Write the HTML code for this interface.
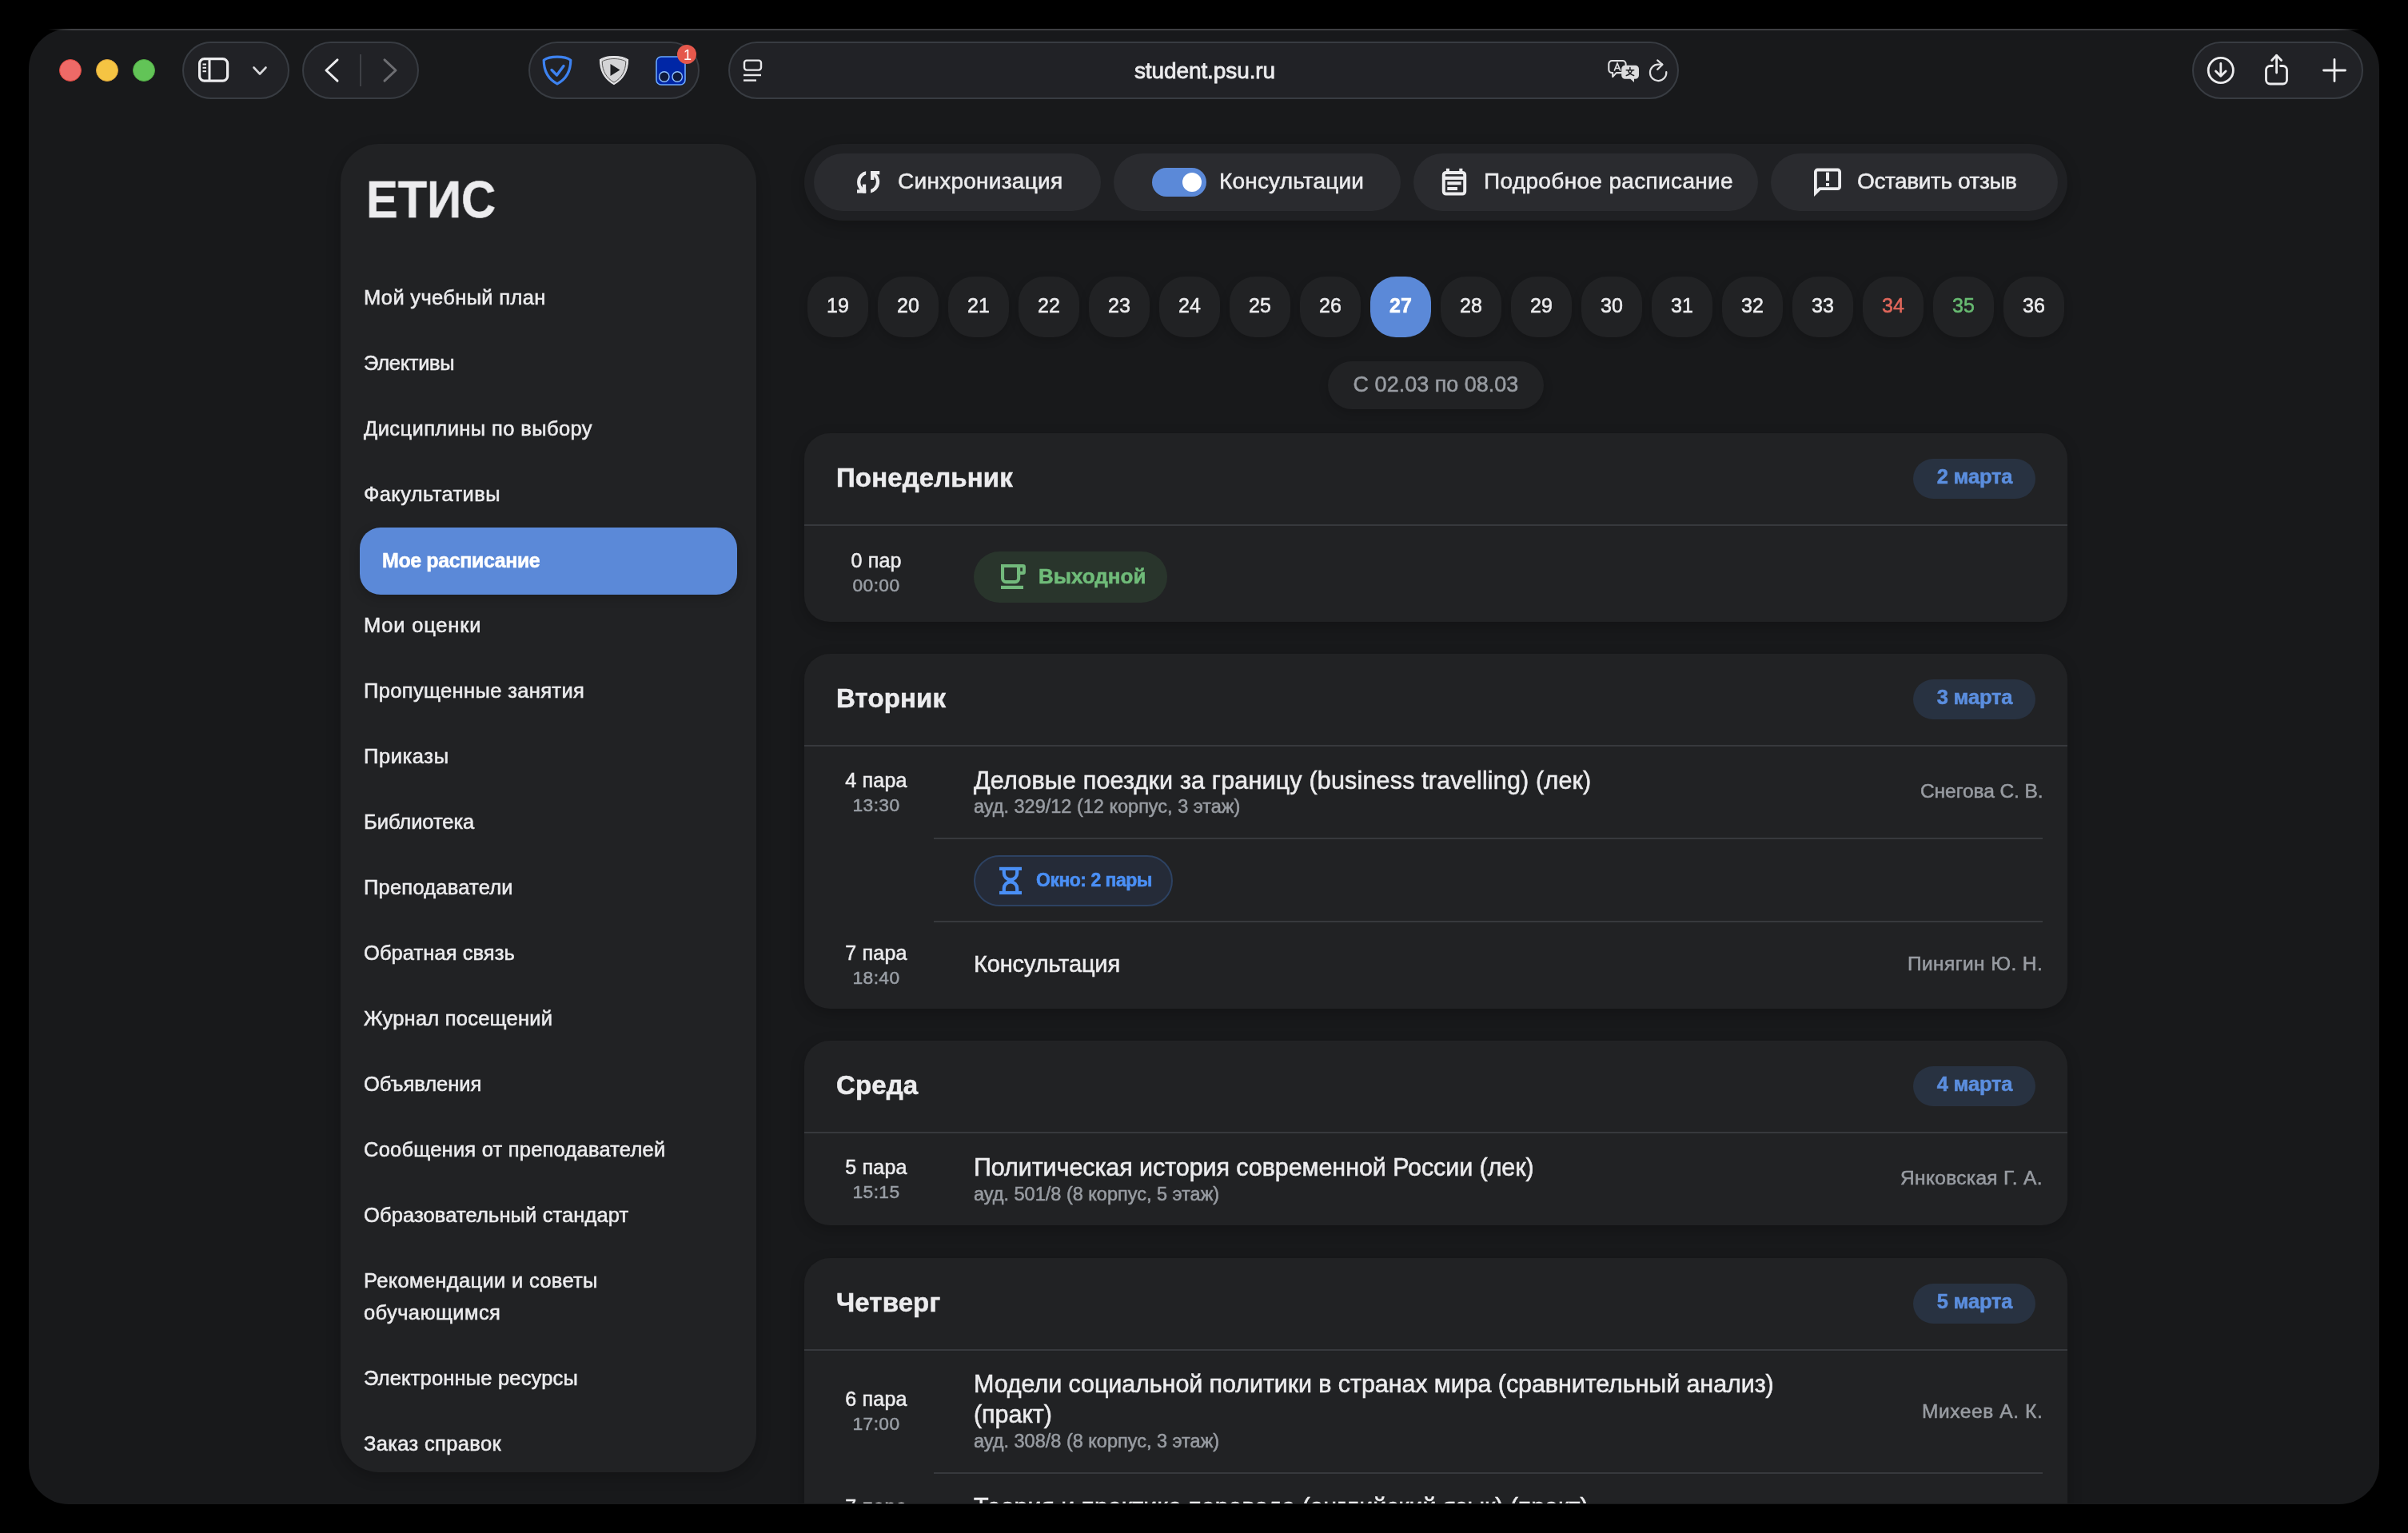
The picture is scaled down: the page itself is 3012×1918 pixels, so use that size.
<!DOCTYPE html><html><head><meta charset="utf-8"><style>
html,body{margin:0;padding:0;}
body{width:3012px;height:1918px;background:#000;position:relative;overflow:hidden;font-family:'Liberation Sans', sans-serif;}
.t{position:absolute;white-space:nowrap;line-height:1;-webkit-text-stroke:0.55px currentColor;will-change:transform;}
.r{position:absolute;}
svg.r{overflow:visible}
#clip{position:absolute;left:0;top:0;width:3012px;height:1881px;overflow:hidden;}
</style></head><body>
<div class="r" style="left:36.0px;top:36.0px;width:2940.0px;height:1846.0px;background:#18191b;border-radius:50px;"></div>
<div class="r" style="left:60.0px;top:36.0px;width:2892.0px;height:1.6px;background:linear-gradient(90deg, rgba(62,63,66,0) 0, #3e3f42 30px, #3e3f42 2862px, rgba(62,63,66,0) 2892px);border-radius:0px;"></div>
<div class="r" style="left:74.0px;top:74.0px;width:28.0px;height:28.0px;background:#ee6a67;border-radius:14px;box-sizing:border-box;border:1px solid #d9463f;"></div>
<div class="r" style="left:120.0px;top:74.0px;width:28.0px;height:28.0px;background:#f5c443;border-radius:14px;box-sizing:border-box;border:1px solid #d9a23a;"></div>
<div class="r" style="left:166.0px;top:74.0px;width:28.0px;height:28.0px;background:#62c457;border-radius:14px;box-sizing:border-box;border:1px solid #4fa843;"></div>
<div class="r" style="left:228.0px;top:52.0px;width:134.0px;height:72.0px;background:#212226;border-radius:36px;box-sizing:border-box;border:2px solid #383c42;"></div>
<div class="r" style="left:378.0px;top:52.0px;width:146.0px;height:72.0px;background:#212226;border-radius:36px;box-sizing:border-box;border:2px solid #383c42;"></div>
<div class="r" style="left:661.0px;top:52.0px;width:214.0px;height:72.0px;background:#212226;border-radius:36px;box-sizing:border-box;border:2px solid #383c42;"></div>
<div class="r" style="left:911.0px;top:52.0px;width:1189.0px;height:72.0px;background:#212226;border-radius:36px;box-sizing:border-box;border:2px solid #383c42;"></div>
<div class="r" style="left:2742.0px;top:52.0px;width:214.0px;height:72.0px;background:#212226;border-radius:36px;box-sizing:border-box;border:2px solid #383c42;"></div>
<svg class="r" style="left:248px;top:72px;" width="40" height="32" viewBox="0 0 40 32"><rect x="1.6" y="1.6" width="35" height="27.6" rx="6" fill="none" stroke="#ececee" stroke-width="3.2"/><line x1="14" y1="2" x2="14" y2="29" stroke="#ececee" stroke-width="3"/><line x1="5.5" y1="8.5" x2="10" y2="8.5" stroke="#ececee" stroke-width="2"/><line x1="5.5" y1="12.8" x2="10" y2="12.8" stroke="#ececee" stroke-width="2"/><line x1="5.5" y1="17.2" x2="10" y2="17.2" stroke="#ececee" stroke-width="2"/></svg>
<svg class="r" style="left:316px;top:83px;" width="18" height="12" viewBox="0 0 18 12"><polyline points="1.5,1.5 9,9.5 16.5,1.5" fill="none" stroke="#d8d8da" stroke-width="2.6" stroke-linecap="round" stroke-linejoin="round"/></svg>
<svg class="r" style="left:405px;top:73px;" width="20" height="30" viewBox="0 0 20 30"><polyline points="17,1.8 3,15 17,28.2" fill="none" stroke="#ececee" stroke-width="3" stroke-linecap="round" stroke-linejoin="round"/></svg>
<div class="r" style="left:450.0px;top:68.0px;width:2.0px;height:40.0px;background:#3e4045;border-radius:0px;"></div>
<svg class="r" style="left:478px;top:73px;" width="20" height="30" viewBox="0 0 20 30"><polyline points="3,1.8 17,15 3,28.2" fill="none" stroke="#6d6e72" stroke-width="3" stroke-linecap="round" stroke-linejoin="round"/></svg>
<svg class="r" style="left:678px;top:69px;" width="38" height="38" viewBox="0 0 38 38"><path d="M19 2.2 C12 2.2 5 4.2 2.2 6.2 C2.2 20 8 30 19 35.8 C30 30 35.8 20 35.8 6.2 C33 4.2 26 2.2 19 2.2 Z" fill="none" stroke="#3d82f0" stroke-width="3.2" stroke-linejoin="round"/><polyline points="12,18.5 18.5,25 27,13.5" fill="none" stroke="#3d82f0" stroke-width="3.4" stroke-linecap="round" stroke-linejoin="round"/></svg>
<svg class="r" style="left:749px;top:69px;" width="38" height="38" viewBox="0 0 38 38"><path d="M19 1.5 C12 1.5 4.5 3.5 1.5 5.8 C1.5 20 8 30.5 19 36.5 C30 30.5 36.5 20 36.5 5.8 C33.5 3.5 26 1.5 19 1.5 Z" fill="#d9d9db" stroke="#e9e9eb" stroke-width="1.2"/><path d="M19 4.5 C13 4.5 6.5 6.2 4.2 8 C4.5 20.5 10 29 19 34 C28 29 33.5 20.5 33.8 8 C31.5 6.2 25 4.5 19 4.5 Z" fill="#d4d4d6" stroke="#555" stroke-width="1"/><polygon points="14.5,11 26.5,18.5 14.5,26" fill="#1e1f22"/></svg>
<svg class="r" style="left:820px;top:70px;" width="38" height="37" viewBox="0 0 38 37"><rect x="1" y="1" width="36" height="35" rx="6" fill="#0026a6" stroke="#6aa8ff" stroke-width="1.6"/><circle cx="10.8" cy="26" r="6.2" fill="#101a3c" stroke="#8fc0ff" stroke-width="1.4"/><circle cx="27.2" cy="26" r="6.2" fill="#101a3c" stroke="#8fc0ff" stroke-width="1.4"/></svg>
<div class="r" style="left:847.0px;top:56.0px;width:24.0px;height:24.0px;background:#e5584c;border-radius:12px;"></div>
<div class="t" style="top:60.2px;font-size:18px;color:#ffffff;font-weight:normal;left:359.5px;width:1000px;text-align:center;-webkit-text-stroke:0;">1</div>
<svg class="r" style="left:929px;top:74px;" width="25" height="29" viewBox="0 0 25 29"><rect x="2" y="1.6" width="21" height="12" rx="3" fill="none" stroke="#e8e8ea" stroke-width="2.4"/><line x1="1" y1="20" x2="23" y2="20" stroke="#e8e8ea" stroke-width="2.4"/><line x1="1" y1="26.6" x2="17" y2="26.6" stroke="#e8e8ea" stroke-width="2.4"/></svg>
<div class="t" style="top:75.2px;font-size:28px;color:#ececee;font-weight:normal;letter-spacing:-0.1px;left:1007.0px;width:1000px;text-align:center;-webkit-text-stroke:0.8px #ececee;">student.psu.ru</div>
<svg class="r" style="left:2011px;top:74px;" width="42" height="32" viewBox="0 0 42 32"><path d="M5.3 2 h13.3 a4 4 0 0 1 4 4 v7.1 a4 4 0 0 1 -4 4 h-7.8 l-4.6 5 v-5 h-0.9 a4 4 0 0 1 -4 -4 v-7.1 a4 4 0 0 1 4 -4z" fill="#212226" stroke="#e0e0e2" stroke-width="2.1" stroke-linejoin="round"/><path d="M8.2 14.6 L12 5.2 L15.8 14.6 M9.5 11.5 H14.5" fill="none" stroke="#e0e0e2" stroke-width="1.6"/><path d="M21.7 7.8 h12.8 a4.5 4.5 0 0 1 4.5 4.5 v8 a4.5 4.5 0 0 1 -4.5 4.5 h-1.5 v4.1 l-4.6 -4.1 h-6.7 a4.5 4.5 0 0 1 -4.5 -4.5 v-8 a4.5 4.5 0 0 1 4.5 -4.5z" fill="#dcdcde"/><path d="M23.2 13.8 H32.7 M27.9 10.6 V13.6 M25.3 13.8 C26.5 17.5 29 19.5 32.6 20.5 M30.6 13.8 C29.4 17.5 27 19.5 23.3 20.5" fill="none" stroke="#1e1f22" stroke-width="1.5" stroke-linecap="round"/></svg>
<svg class="r" style="left:2060px;top:74px;" width="30" height="30" viewBox="0 0 30 30"><path d="M19 6.7 H14.1 A10.2 10.2 0 1 0 24.3 16" fill="none" stroke="#e0e0e2" stroke-width="2.2" stroke-linecap="round"/><polyline points="13.2,1.4 19.5,6.8 13.2,12.9" fill="none" stroke="#e0e0e2" stroke-width="2.2" stroke-linecap="round" stroke-linejoin="round"/></svg>
<svg class="r" style="left:2760px;top:70px;" width="36" height="36" viewBox="0 0 36 36"><circle cx="17.8" cy="18" r="15.6" fill="none" stroke="#ececee" stroke-width="2.8"/><line x1="17.8" y1="9.5" x2="17.8" y2="24.5" stroke="#ececee" stroke-width="2.8" stroke-linecap="round"/><polyline points="11.5,19 17.8,25.2 24.1,19" fill="none" stroke="#ececee" stroke-width="2.8" stroke-linecap="round" stroke-linejoin="round"/></svg>
<svg class="r" style="left:2833px;top:67px;" width="32" height="40" viewBox="0 0 32 40"><path d="M9.5 15.5 h-3 a5 5 0 0 0 -5 5 v12.5 a5 5 0 0 0 5 5 h16 a5 5 0 0 0 5 -5 v-12.5 a5 5 0 0 0 -5 -5 h-3" fill="none" stroke="#ececee" stroke-width="2.8" stroke-linecap="round"/><line x1="14.6" y1="2.5" x2="14.6" y2="24" stroke="#ececee" stroke-width="2.8" stroke-linecap="round"/><polyline points="8.6,8.5 14.6,2.3 20.6,8.5" fill="none" stroke="#ececee" stroke-width="2.8" stroke-linecap="round" stroke-linejoin="round"/></svg>
<svg class="r" style="left:2905px;top:73px;" width="30" height="30" viewBox="0 0 30 30"><line x1="15" y1="1.5" x2="15" y2="28.5" stroke="#ececee" stroke-width="2.8" stroke-linecap="round"/><line x1="1.5" y1="15" x2="28.5" y2="15" stroke="#ececee" stroke-width="2.8" stroke-linecap="round"/></svg>
<div id="clip">
<div class="r" style="left:426.0px;top:180.0px;width:519.5px;height:1661.5px;background:#212224;border-radius:48px;box-shadow:0 6px 18px rgba(0,0,0,0.22);"></div>
<div class="t" style="top:216.8px;font-size:65px;color:#ececee;font-weight:bold;left:458.3px;transform:scaleX(0.917);transform-origin:0 0;">ЕТИС</div>
<div class="t" style="top:360.1px;font-size:25.5px;color:#ececee;font-weight:normal;letter-spacing:0.333px;left:454.7px;">Мой учебный план</div>
<div class="t" style="top:442.1px;font-size:25.5px;color:#ececee;font-weight:normal;letter-spacing:-0.3px;left:454.7px;">Элективы</div>
<div class="t" style="top:524.1px;font-size:25.5px;color:#ececee;font-weight:normal;letter-spacing:0.405px;left:454.7px;">Дисциплины по выбору</div>
<div class="t" style="top:606.1px;font-size:25.5px;color:#ececee;font-weight:normal;letter-spacing:0.391px;left:454.7px;">Факультативы</div>
<div class="r" style="left:450.0px;top:660.0px;width:472.0px;height:84.0px;background:#5b89d8;border-radius:26px;box-shadow:0 4px 14px rgba(0,0,0,0.2);"></div>
<div class="t" style="top:688.5px;font-size:25px;color:#ffffff;font-weight:bold;letter-spacing:-0.4px;left:478.0px;">Мое расписание</div>
<div class="t" style="top:770.1px;font-size:25.5px;color:#ececee;font-weight:normal;letter-spacing:0.8px;left:454.7px;">Мои оценки</div>
<div class="t" style="top:852.1px;font-size:25.5px;color:#ececee;font-weight:normal;letter-spacing:0.356px;left:454.7px;">Пропущенные занятия</div>
<div class="t" style="top:934.1px;font-size:25.5px;color:#ececee;font-weight:normal;letter-spacing:0.6px;left:454.7px;">Приказы</div>
<div class="t" style="top:1016.1px;font-size:25.5px;color:#ececee;font-weight:normal;letter-spacing:-0.045px;left:454.7px;">Библиотека</div>
<div class="t" style="top:1098.1px;font-size:25.5px;color:#ececee;font-weight:normal;letter-spacing:0.225px;left:454.7px;">Преподаватели</div>
<div class="t" style="top:1180.1px;font-size:25.5px;color:#ececee;font-weight:normal;letter-spacing:0.069px;left:454.7px;">Обратная связь</div>
<div class="t" style="top:1262.1px;font-size:25.5px;color:#ececee;font-weight:normal;letter-spacing:0.233px;left:454.7px;">Журнал посещений</div>
<div class="t" style="top:1344.1px;font-size:25.5px;color:#ececee;font-weight:normal;letter-spacing:-0.033px;left:454.7px;">Объявления</div>
<div class="t" style="top:1426.1px;font-size:25.5px;color:#ececee;font-weight:normal;letter-spacing:0.22px;left:454.7px;">Сообщения от преподавателей</div>
<div class="t" style="top:1508.1px;font-size:25.5px;color:#ececee;font-weight:normal;letter-spacing:0.126px;left:454.7px;">Образовательный стандарт</div>
<div class="t" style="top:1590.1px;font-size:25.5px;color:#ececee;font-weight:normal;letter-spacing:0.325px;left:454.7px;">Рекомендации и советы</div>
<div class="t" style="top:1630.1px;font-size:25.5px;color:#ececee;font-weight:normal;letter-spacing:0.4px;left:454.7px;">обучающимся</div>
<div class="t" style="top:1712.1px;font-size:25.5px;color:#ececee;font-weight:normal;letter-spacing:0.178px;left:454.7px;">Электронные ресурсы</div>
<div class="t" style="top:1794.1px;font-size:25.5px;color:#ececee;font-weight:normal;letter-spacing:0.342px;left:454.7px;">Заказ справок</div>
<div class="r" style="left:1006.0px;top:180.0px;width:1580.0px;height:95.5px;background:#1f2023;border-radius:48px;box-shadow:0 6px 18px rgba(0,0,0,0.22);"></div>
<div class="r" style="left:1018.0px;top:192.0px;width:359.0px;height:72.0px;background:#2a2b2f;border-radius:36px;"></div>
<div class="r" style="left:1393.0px;top:192.0px;width:358.5px;height:72.0px;background:#2a2b2f;border-radius:36px;"></div>
<div class="r" style="left:1767.6px;top:192.0px;width:431.4px;height:72.0px;background:#2a2b2f;border-radius:36px;"></div>
<div class="r" style="left:2215.0px;top:192.0px;width:359.0px;height:72.0px;background:#2a2b2f;border-radius:36px;"></div>
<div class="t" style="top:213.0px;font-size:28px;color:#ececee;font-weight:normal;letter-spacing:0.27px;left:1122.5px;">Синхронизация</div>
<div class="t" style="top:213.0px;font-size:28px;color:#ececee;font-weight:normal;letter-spacing:0.18px;left:1524.8px;">Консультации</div>
<div class="t" style="top:213.0px;font-size:28px;color:#ececee;font-weight:normal;letter-spacing:0.34px;left:1856.0px;">Подробное расписание</div>
<div class="t" style="top:213.0px;font-size:28px;color:#ececee;font-weight:normal;letter-spacing:-0.4px;left:2322.5px;">Оставить отзыв</div>
<svg class="r" style="left:1072px;top:214px;" width="29" height="28" viewBox="0 0 29 28"><defs><clipPath id="syc"><rect x="-3" y="-3" width="14.15" height="30.6"/></clipPath><g id="syg"><circle cx="14.15" cy="14" r="12" fill="none" stroke="#ececee" stroke-width="4.2" clip-path="url(#syc)"/><rect x="0" y="23.3" width="11.15" height="4.3" fill="#ececee"/><rect x="6.85" y="16.6" width="4.3" height="11" fill="#ececee"/></g></defs><use href="#syg"/><use href="#syg" transform="rotate(180 14.1 13.8)"/></svg>
<div class="r" style="left:1440.6px;top:209.8px;width:68.0px;height:36.2px;background:#5b89d8;border-radius:18px;"></div>
<div class="r" style="left:1478.8px;top:216.0px;width:24.0px;height:24.0px;background:#ffffff;border-radius:12px;"></div>
<svg class="r" style="left:1803px;top:210px;" width="32" height="36" viewBox="0 0 32 36"><rect x="2.8" y="5.9" width="26.4" height="26.7" rx="3" fill="none" stroke="#ececee" stroke-width="4"/><rect x="5.9" y="0.8" width="4.1" height="5" fill="#ececee"/><rect x="22.3" y="0.8" width="4.1" height="5" fill="#ececee"/><rect x="2.8" y="10.7" width="26.4" height="4.2" fill="#ececee"/><rect x="7.3" y="17.2" width="17.4" height="4.1" fill="#ececee"/><rect x="7.3" y="24" width="12.7" height="4" fill="#ececee"/></svg>
<svg class="r" style="left:2268px;top:210px;" width="36" height="36" viewBox="0 0 36 36"><path d="M2.9 31 V5 a2.5 2.5 0 0 1 2.5 -2.5 H30.6 a2.5 2.5 0 0 1 2.5 2.5 V23.7 a2.5 2.5 0 0 1 -2.5 2.5 H8.2 L2.9 31.5 Z" fill="none" stroke="#ececee" stroke-width="3.8" stroke-linejoin="miter"/><polygon points="1,26 1,34.8 9.5,26" fill="#ececee"/><rect x="16" y="5.6" width="4" height="10.6" fill="#ececee"/><rect x="16" y="19" width="4" height="3.9" fill="#ececee"/></svg>
<div class="r" style="left:1010.0px;top:346.0px;width:76.0px;height:76.0px;background:#212224;border-radius:32px;box-shadow:0 4px 12px rgba(0,0,0,0.18);"></div>
<div class="t" style="top:370.1px;font-size:25px;color:#ececee;font-weight:normal;left:548.0px;width:1000px;text-align:center;">19</div>
<div class="r" style="left:1098.0px;top:346.0px;width:76.0px;height:76.0px;background:#212224;border-radius:32px;box-shadow:0 4px 12px rgba(0,0,0,0.18);"></div>
<div class="t" style="top:370.1px;font-size:25px;color:#ececee;font-weight:normal;left:636.0px;width:1000px;text-align:center;">20</div>
<div class="r" style="left:1186.0px;top:346.0px;width:76.0px;height:76.0px;background:#212224;border-radius:32px;box-shadow:0 4px 12px rgba(0,0,0,0.18);"></div>
<div class="t" style="top:370.1px;font-size:25px;color:#ececee;font-weight:normal;left:724.0px;width:1000px;text-align:center;">21</div>
<div class="r" style="left:1274.0px;top:346.0px;width:76.0px;height:76.0px;background:#212224;border-radius:32px;box-shadow:0 4px 12px rgba(0,0,0,0.18);"></div>
<div class="t" style="top:370.1px;font-size:25px;color:#ececee;font-weight:normal;left:812.0px;width:1000px;text-align:center;">22</div>
<div class="r" style="left:1362.0px;top:346.0px;width:76.0px;height:76.0px;background:#212224;border-radius:32px;box-shadow:0 4px 12px rgba(0,0,0,0.18);"></div>
<div class="t" style="top:370.1px;font-size:25px;color:#ececee;font-weight:normal;left:900.0px;width:1000px;text-align:center;">23</div>
<div class="r" style="left:1450.0px;top:346.0px;width:76.0px;height:76.0px;background:#212224;border-radius:32px;box-shadow:0 4px 12px rgba(0,0,0,0.18);"></div>
<div class="t" style="top:370.1px;font-size:25px;color:#ececee;font-weight:normal;left:988.0px;width:1000px;text-align:center;">24</div>
<div class="r" style="left:1538.0px;top:346.0px;width:76.0px;height:76.0px;background:#212224;border-radius:32px;box-shadow:0 4px 12px rgba(0,0,0,0.18);"></div>
<div class="t" style="top:370.1px;font-size:25px;color:#ececee;font-weight:normal;left:1076.0px;width:1000px;text-align:center;">25</div>
<div class="r" style="left:1626.0px;top:346.0px;width:76.0px;height:76.0px;background:#212224;border-radius:32px;box-shadow:0 4px 12px rgba(0,0,0,0.18);"></div>
<div class="t" style="top:370.1px;font-size:25px;color:#ececee;font-weight:normal;left:1164.0px;width:1000px;text-align:center;">26</div>
<div class="r" style="left:1714.0px;top:346.0px;width:76.0px;height:76.0px;background:#5b89d8;border-radius:32px;"></div>
<div class="t" style="top:370.1px;font-size:25px;color:#ffffff;font-weight:bold;left:1252.0px;width:1000px;text-align:center;">27</div>
<div class="r" style="left:1802.0px;top:346.0px;width:76.0px;height:76.0px;background:#212224;border-radius:32px;box-shadow:0 4px 12px rgba(0,0,0,0.18);"></div>
<div class="t" style="top:370.1px;font-size:25px;color:#ececee;font-weight:normal;left:1340.0px;width:1000px;text-align:center;">28</div>
<div class="r" style="left:1890.0px;top:346.0px;width:76.0px;height:76.0px;background:#212224;border-radius:32px;box-shadow:0 4px 12px rgba(0,0,0,0.18);"></div>
<div class="t" style="top:370.1px;font-size:25px;color:#ececee;font-weight:normal;left:1428.0px;width:1000px;text-align:center;">29</div>
<div class="r" style="left:1978.0px;top:346.0px;width:76.0px;height:76.0px;background:#212224;border-radius:32px;box-shadow:0 4px 12px rgba(0,0,0,0.18);"></div>
<div class="t" style="top:370.1px;font-size:25px;color:#ececee;font-weight:normal;left:1516.0px;width:1000px;text-align:center;">30</div>
<div class="r" style="left:2066.0px;top:346.0px;width:76.0px;height:76.0px;background:#212224;border-radius:32px;box-shadow:0 4px 12px rgba(0,0,0,0.18);"></div>
<div class="t" style="top:370.1px;font-size:25px;color:#ececee;font-weight:normal;left:1604.0px;width:1000px;text-align:center;">31</div>
<div class="r" style="left:2154.0px;top:346.0px;width:76.0px;height:76.0px;background:#212224;border-radius:32px;box-shadow:0 4px 12px rgba(0,0,0,0.18);"></div>
<div class="t" style="top:370.1px;font-size:25px;color:#ececee;font-weight:normal;left:1692.0px;width:1000px;text-align:center;">32</div>
<div class="r" style="left:2242.0px;top:346.0px;width:76.0px;height:76.0px;background:#212224;border-radius:32px;box-shadow:0 4px 12px rgba(0,0,0,0.18);"></div>
<div class="t" style="top:370.1px;font-size:25px;color:#ececee;font-weight:normal;left:1780.0px;width:1000px;text-align:center;">33</div>
<div class="r" style="left:2330.0px;top:346.0px;width:76.0px;height:76.0px;background:#212224;border-radius:32px;box-shadow:0 4px 12px rgba(0,0,0,0.18);"></div>
<div class="t" style="top:370.1px;font-size:25px;color:#e0675b;font-weight:normal;left:1868.0px;width:1000px;text-align:center;">34</div>
<div class="r" style="left:2418.0px;top:346.0px;width:76.0px;height:76.0px;background:#212224;border-radius:32px;box-shadow:0 4px 12px rgba(0,0,0,0.18);"></div>
<div class="t" style="top:370.1px;font-size:25px;color:#68bb72;font-weight:normal;left:1956.0px;width:1000px;text-align:center;">35</div>
<div class="r" style="left:2506.0px;top:346.0px;width:76.0px;height:76.0px;background:#212224;border-radius:32px;box-shadow:0 4px 12px rgba(0,0,0,0.18);"></div>
<div class="t" style="top:370.1px;font-size:25px;color:#ececee;font-weight:normal;left:2044.0px;width:1000px;text-align:center;">36</div>
<div class="r" style="left:1661.0px;top:452.0px;width:270.0px;height:60.0px;background:#212224;border-radius:30px;box-shadow:0 4px 12px rgba(0,0,0,0.18);"></div>
<div class="t" style="top:467.6px;font-size:27px;color:#989ca2;font-weight:normal;left:1296.0px;width:1000px;text-align:center;">С 02.03 по 08.03</div>
<div class="r" style="left:1006.0px;top:542.0px;width:1580.0px;height:236.0px;background:#212224;border-radius:32px;box-shadow:0 6px 18px rgba(0,0,0,0.22);"></div>
<div class="r" style="left:1006.0px;top:656.0px;width:1580.0px;height:2.0px;background:#37393d;border-radius:0px;"></div>
<div class="t" style="top:581.2px;font-size:33px;color:#ececee;font-weight:bold;letter-spacing:0.13px;left:1045.8px;">Понедельник</div>
<div class="r" style="left:2393.0px;top:574.0px;width:153.0px;height:50.0px;background:#283241;border-radius:25px;"></div>
<div class="t" style="top:584.3px;font-size:25.5px;color:#5b8ede;font-weight:bold;letter-spacing:-0.2px;left:1969.5px;width:1000px;text-align:center;">2 марта</div>
<div class="t" style="top:688.5px;font-size:25px;color:#ececee;font-weight:normal;letter-spacing:0.2px;left:595.5px;width:1000px;text-align:center;">0 пар</div>
<div class="t" style="top:720.8px;font-size:22.8px;color:#999ea5;font-weight:normal;letter-spacing:0.4px;left:595.5px;width:1000px;text-align:center;">00:00</div>
<div class="r" style="left:1218.0px;top:690.0px;width:242.0px;height:64.0px;background:#29352c;border-radius:32px;"></div>
<svg class="r" style="left:1251px;top:705px;" width="34" height="34" viewBox="0 0 34 34"><path d="M3.05 3.05 V18.65 a4.5 4.5 0 0 0 4.5 4.5 H18.65 a4.5 4.5 0 0 0 4.5 -4.5 V3.05 Z" fill="none" stroke="#72b97c" stroke-width="4.1"/><path fill-rule="evenodd" fill="#72b97c" d="M21 1 H28.6 a3.3 3.3 0 0 1 3.3 3.3 V10.7 a3.3 3.3 0 0 1 -3.3 3.3 H21 Z M25 5.2 V9.7 H28 V5.2 Z"/><rect x="1" y="27.8" width="28" height="4.2" fill="#72b97c"/></svg>
<div class="t" style="top:707.9px;font-size:26px;color:#6fbb79;font-weight:bold;left:1298.5px;">Выходной</div>
<div class="r" style="left:1006.0px;top:818.0px;width:1580.0px;height:444.0px;background:#212224;border-radius:32px;box-shadow:0 6px 18px rgba(0,0,0,0.22);"></div>
<div class="r" style="left:1006.0px;top:932.0px;width:1580.0px;height:2.0px;background:#37393d;border-radius:0px;"></div>
<div class="t" style="top:857.2px;font-size:33px;color:#ececee;font-weight:bold;letter-spacing:0.13px;left:1045.8px;">Вторник</div>
<div class="r" style="left:2393.0px;top:850.0px;width:153.0px;height:50.0px;background:#283241;border-radius:25px;"></div>
<div class="t" style="top:860.3px;font-size:25.5px;color:#5b8ede;font-weight:bold;letter-spacing:-0.2px;left:1969.5px;width:1000px;text-align:center;">3 марта</div>
<div class="t" style="top:963.5px;font-size:25px;color:#ececee;font-weight:normal;letter-spacing:0.2px;left:595.5px;width:1000px;text-align:center;">4 пара</div>
<div class="t" style="top:995.7px;font-size:22.8px;color:#999ea5;font-weight:normal;letter-spacing:0.4px;left:595.5px;width:1000px;text-align:center;">13:30</div>
<div class="t" style="top:961.1px;font-size:30.5px;color:#ececee;font-weight:normal;letter-spacing:0.18px;left:1218.0px;">Деловые поездки за границу (business travelling) (лек)</div>
<div class="t" style="top:998.2px;font-size:23.5px;color:#989ca2;font-weight:normal;left:1218.0px;">ауд. 329/12 (12 корпус, 3 этаж)</div>
<div class="t" style="top:978.0px;font-size:24.5px;color:#989ca2;font-weight:normal;letter-spacing:-0.07px;right:456.8px;text-align:right;">Снегова С. В.</div>
<div class="r" style="left:1168.0px;top:1048.0px;width:1386.5px;height:2.0px;background:#37393d;border-radius:0px;"></div>
<div class="r" style="left:1218.0px;top:1070.0px;width:248.5px;height:64.0px;background:#252b38;border-radius:32px;box-sizing:border-box;border:2px solid #2d4262;"></div>
<svg class="r" style="left:1249px;top:1084px;" width="30" height="36" viewBox="0 0 30 36"><rect x="1" y="0.8" width="28" height="4.2" fill="#4a8ff5"/><rect x="1" y="30.9" width="28" height="4.2" fill="#4a8ff5"/><path d="M6.8 4.5 V8.5 a8.2 8.2 0 0 0 8.2 8.2 a8.2 8.2 0 0 0 8.2 -8.2 V4.5" fill="none" stroke="#4a8ff5" stroke-width="4.2"/><path d="M6.8 31.5 V27.5 a8.2 8.2 0 0 1 8.2 -8.2 a8.2 8.2 0 0 1 8.2 8.2 V31.5" fill="none" stroke="#4a8ff5" stroke-width="4.2"/></svg>
<div class="t" style="top:1089.8px;font-size:23px;color:#4a8ff5;font-weight:bold;letter-spacing:-0.5px;left:1296.0px;">Окно: 2 пары</div>
<div class="r" style="left:1168.0px;top:1152.0px;width:1386.5px;height:2.0px;background:#37393d;border-radius:0px;"></div>
<div class="t" style="top:1179.5px;font-size:25px;color:#ececee;font-weight:normal;letter-spacing:0.2px;left:595.5px;width:1000px;text-align:center;">7 пара</div>
<div class="t" style="top:1211.7px;font-size:22.8px;color:#999ea5;font-weight:normal;letter-spacing:0.4px;left:595.5px;width:1000px;text-align:center;">18:40</div>
<div class="t" style="top:1191.8px;font-size:29px;color:#ececee;font-weight:normal;letter-spacing:-0.15px;left:1218.0px;">Консультация</div>
<div class="t" style="top:1194.0px;font-size:24.5px;color:#989ca2;font-weight:normal;letter-spacing:0.4px;right:456.8px;text-align:right;">Пинягин Ю. Н.</div>
<div class="r" style="left:1006.0px;top:1301.6px;width:1580.0px;height:231.9px;background:#212224;border-radius:32px;box-shadow:0 6px 18px rgba(0,0,0,0.22);"></div>
<div class="r" style="left:1006.0px;top:1415.6px;width:1580.0px;height:2.0px;background:#37393d;border-radius:0px;"></div>
<div class="t" style="top:1340.8px;font-size:33px;color:#ececee;font-weight:bold;letter-spacing:0.13px;left:1045.8px;">Среда</div>
<div class="r" style="left:2393.0px;top:1333.6px;width:153.0px;height:50.0px;background:#283241;border-radius:25px;"></div>
<div class="t" style="top:1343.9px;font-size:25.5px;color:#5b8ede;font-weight:bold;letter-spacing:-0.2px;left:1969.5px;width:1000px;text-align:center;">4 марта</div>
<div class="t" style="top:1447.8px;font-size:25px;color:#ececee;font-weight:normal;letter-spacing:0.2px;left:595.5px;width:1000px;text-align:center;">5 пара</div>
<div class="t" style="top:1480.0px;font-size:22.8px;color:#999ea5;font-weight:normal;letter-spacing:0.4px;left:595.5px;width:1000px;text-align:center;">15:15</div>
<div class="t" style="top:1445.1px;font-size:30.5px;color:#ececee;font-weight:normal;letter-spacing:-0.08px;left:1218.0px;">Политическая история современной России (лек)</div>
<div class="t" style="top:1483.4px;font-size:23.5px;color:#989ca2;font-weight:normal;left:1218.0px;">ауд. 501/8 (8 корпус, 5 этаж)</div>
<div class="t" style="top:1462.2px;font-size:24.5px;color:#989ca2;font-weight:normal;letter-spacing:0.33px;right:456.8px;text-align:right;">Янковская Г. А.</div>
<div class="r" style="left:1006.0px;top:1574.0px;width:1580.0px;height:526.0px;background:#212224;border-radius:32px;box-shadow:0 6px 18px rgba(0,0,0,0.22);"></div>
<div class="r" style="left:1006.0px;top:1688.0px;width:1580.0px;height:2.0px;background:#37393d;border-radius:0px;"></div>
<div class="t" style="top:1613.2px;font-size:33px;color:#ececee;font-weight:bold;letter-spacing:0.13px;left:1045.8px;">Четверг</div>
<div class="r" style="left:2393.0px;top:1606.0px;width:153.0px;height:50.0px;background:#283241;border-radius:25px;"></div>
<div class="t" style="top:1616.3px;font-size:25.5px;color:#5b8ede;font-weight:bold;letter-spacing:-0.2px;left:1969.5px;width:1000px;text-align:center;">5 марта</div>
<div class="t" style="top:1738.0px;font-size:25px;color:#ececee;font-weight:normal;letter-spacing:0.2px;left:595.5px;width:1000px;text-align:center;">6 пара</div>
<div class="t" style="top:1770.3px;font-size:22.8px;color:#999ea5;font-weight:normal;letter-spacing:0.4px;left:595.5px;width:1000px;text-align:center;">17:00</div>
<div class="t" style="top:1716.3px;font-size:30.5px;color:#ececee;font-weight:normal;letter-spacing:-0.085px;left:1218.0px;">Модели социальной политики в странах мира (сравнительный анализ)</div>
<div class="t" style="top:1753.7px;font-size:30.5px;color:#ececee;font-weight:normal;letter-spacing:-0.085px;left:1218.0px;">(практ)</div>
<div class="t" style="top:1792.0px;font-size:23.5px;color:#989ca2;font-weight:normal;left:1218.0px;">ауд. 308/8 (8 корпус, 3 этаж)</div>
<div class="t" style="top:1754.2px;font-size:24.5px;color:#989ca2;font-weight:normal;letter-spacing:0.6px;right:456.8px;text-align:right;">Михеев А. К.</div>
<div class="r" style="left:1168.0px;top:1842.0px;width:1386.5px;height:2.0px;background:#37393d;border-radius:0px;"></div>
<div class="t" style="top:1873.2px;font-size:25px;color:#ececee;font-weight:normal;letter-spacing:0.2px;left:595.5px;width:1000px;text-align:center;">7 пара</div>
<div class="t" style="top:1905.5px;font-size:22.8px;color:#999ea5;font-weight:normal;letter-spacing:0.4px;left:595.5px;width:1000px;text-align:center;">18:40</div>
<div class="t" style="top:1869.6px;font-size:30.5px;color:#ececee;font-weight:normal;letter-spacing:-0.085px;left:1218.0px;">Теория и практика перевода (английский язык) (практ)</div>
</div>
</body></html>
